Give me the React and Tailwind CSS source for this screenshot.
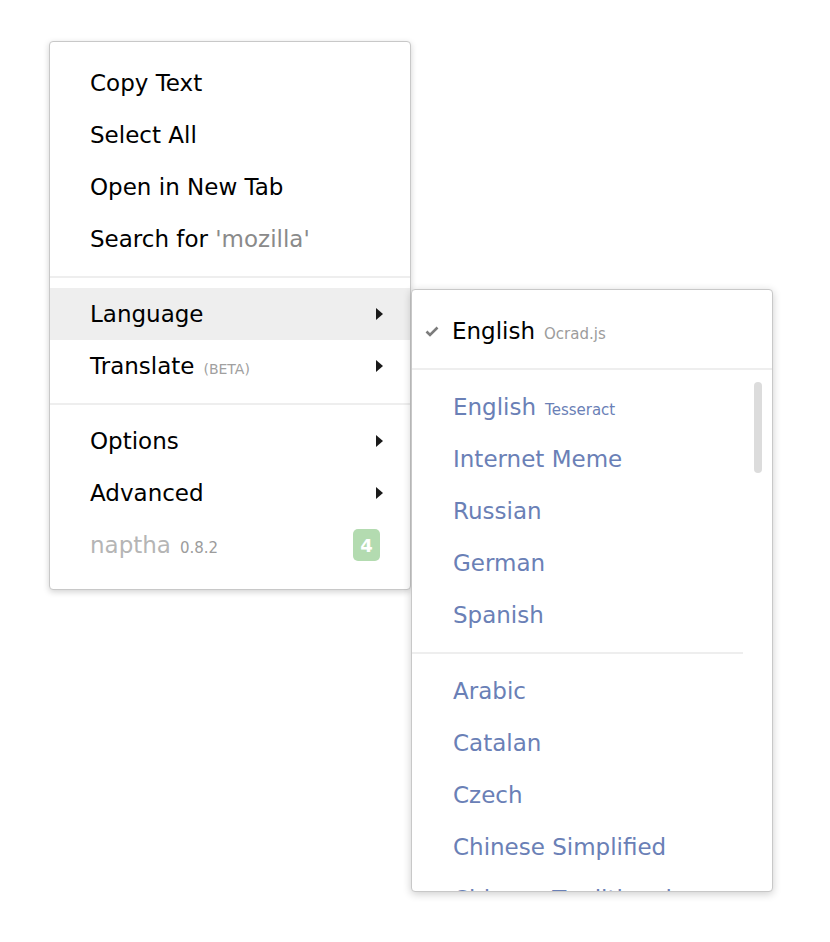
import React from "react";

const Arrow = () => (
  <svg width="7" height="12" viewBox="0 0 7 12" className="block">
    <path d="M0 0 L7 6 L0 12 Z" fill="#1a1a1a" />
  </svg>
);

const Row = ({ children, arrow, active }) => (
  <div
    className={
      "h-[52px] flex items-center pl-[40px] pr-[27px] " +
      (active ? "bg-[#eeeeee]" : "")
    }
  >
    <div className="flex-1 flex items-baseline">{children}</div>
    {arrow && <Arrow />}
  </div>
);

const Sep = () => (
  <div className="h-[23px] flex items-center">
    <div className="h-[2px] w-full bg-[#eeeeee]" />
  </div>
);

const SubItem = ({ children }) => (
  <div className="h-[52px] flex items-center pl-[41px] text-[#6a80b6]">
    <div className="flex items-baseline">{children}</div>
  </div>
);

export default function App() {
  const font = { fontFamily: '"DejaVu Sans", "Liberation Sans", sans-serif' };
  return (
    <div
      className="relative w-[830px] h-[942px] bg-white text-[23px] text-black"
      style={font}
    >
      {/* Main menu */}
      <div className="absolute left-[49px] top-[41px] w-[362px] h-[549px] bg-white border border-[#c8c8c8] rounded-[4px] shadow-[0_2px_6px_rgba(0,0,0,0.18)] pt-[15px] pb-[18px]">
        <Row>Copy Text</Row>
        <Row>Select All</Row>
        <Row>Open in New Tab</Row>
        <Row>
          Search for&nbsp;<span className="text-[#8a8a8a]">'mozilla'</span>
        </Row>
        <Sep />
        <Row arrow active>
          Language
        </Row>
        <Row arrow>
          Translate
          <span className="ml-[9px] text-[14px] text-[#a0a0a0]">(BETA)</span>
        </Row>
        <Sep />
        <Row arrow>Options</Row>
        <Row arrow>Advanced</Row>
        <div className="h-[52px] flex items-center pl-[40px] pr-[30px]">
          <div className="flex-1 flex items-baseline text-[#b5b5b5]">
            naptha
            <span className="ml-[9px] text-[15px] text-[#9c9c9c]">0.8.2</span>
          </div>
          <div className="w-[27px] h-[32px] rounded-[5px] bg-[#b3dbb0] text-white text-[18px] font-bold flex items-center justify-center">
            4
          </div>
        </div>
      </div>

      {/* Submenu */}
      <div className="absolute left-[411px] top-[289px] w-[362px] h-[603px] bg-white border border-[#c8c8c8] rounded-[4px] shadow-[0_2px_8px_rgba(0,0,0,0.2)] pt-[15px] flex flex-col overflow-hidden">
        <div className="h-[52px] flex items-center pl-[13px] shrink-0">
          <svg width="14" height="11" viewBox="0 0 14 11" className="mr-[13px]">
            <path
              d="M1.5 5.5 L5 9 L12.5 1.5"
              fill="none"
              stroke="#7c7c7c"
              strokeWidth="2.6"
            />
          </svg>
          <div className="flex items-baseline">
            English
            <span className="ml-[9px] text-[15px] text-[#9c9c9c]">Ocrad.js</span>
          </div>
        </div>
        <div className="h-[24px] flex items-center shrink-0">
          <div className="h-[2px] w-full bg-[#eeeeee]" />
        </div>
        <div className="relative flex-1 overflow-hidden">
          <div className="w-[331px]">
            <SubItem>
              English
              <span className="ml-[9px] text-[15px]">Tesseract</span>
            </SubItem>
            <SubItem>Internet Meme</SubItem>
            <SubItem>Russian</SubItem>
            <SubItem>German</SubItem>
            <SubItem>Spanish</SubItem>
            <div className="h-[24px] flex items-center">
              <div className="h-[2px] w-full bg-[#eeeeee]" />
            </div>
            <SubItem>Arabic</SubItem>
            <SubItem>Catalan</SubItem>
            <SubItem>Czech</SubItem>
            <SubItem>Chinese Simplified</SubItem>
            <SubItem>Chinese Traditional</SubItem>
          </div>
          <div className="absolute right-[10px] top-[1px] w-[8px] h-[91px] rounded-full bg-[#dcdcdc]" />
        </div>
      </div>
    </div>
  );
}
